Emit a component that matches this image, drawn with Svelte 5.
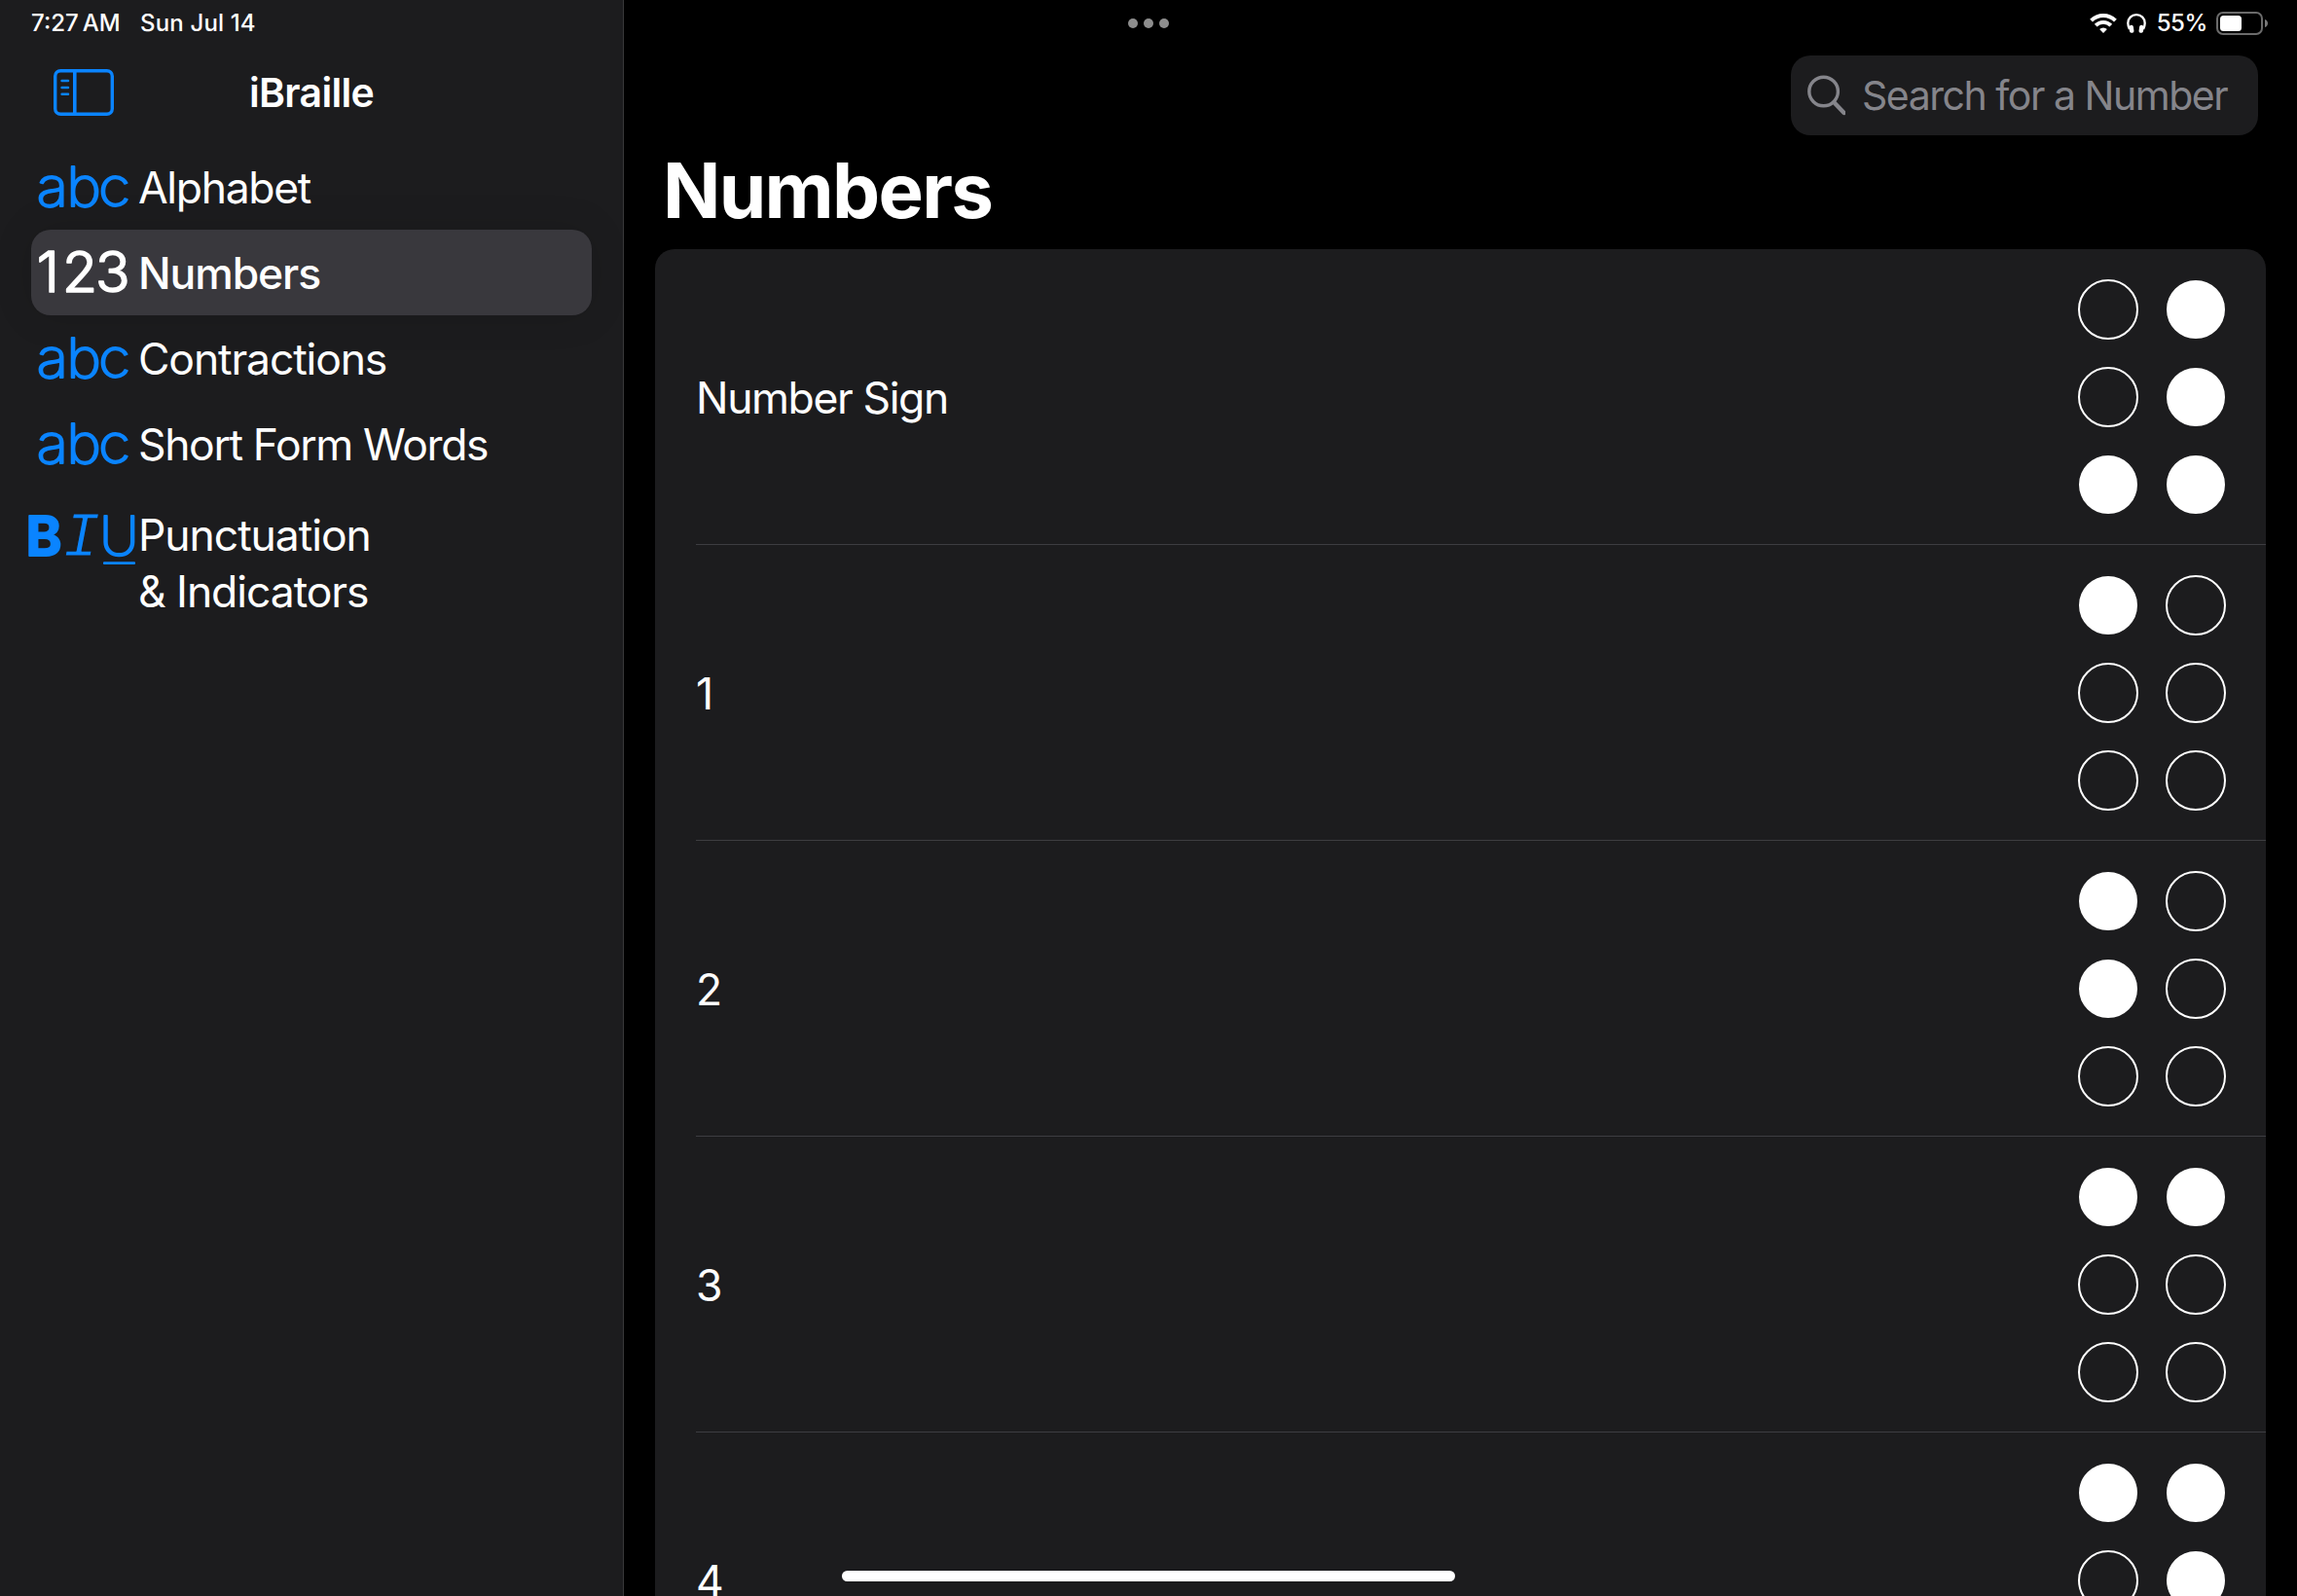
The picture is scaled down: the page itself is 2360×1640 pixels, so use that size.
<script>
  const nav = [
    { icon: 'abc', lines: ['Alphabet'], cls: 'alphabet' },
    { icon: '123', lines: ['Numbers'], cls: 'numbers', selected: true },
    { icon: 'abc', lines: ['Contractions'], cls: 'contractions' },
    { icon: 'abc', lines: ['Short Form Words'], cls: 'short' },
    { icon: 'biu', lines: ['Punctuation', '& Indicators'], cls: 'punctuation' }
  ];

  // Cells are listed row by row: left dot, right dot.
  const rows = [
    { label: 'Number Sign', cells: [0, 1, 0, 1, 1, 1] },
    { label: '1', cells: [1, 0, 0, 0, 0, 0] },
    { label: '2', cells: [1, 0, 1, 0, 0, 0] },
    { label: '3', cells: [1, 1, 0, 0, 0, 0] },
    { label: '4', cells: [1, 1, 0, 1, 0, 0] }
  ];
</script>

<div class="app">
  <aside class="sidebar">
    <div class="status left">
      <span>7:27</span><span class="am">AM</span><span class="date">Sun Jul 14</span>
    </div>

    <header class="side-head">
      <svg class="toggle" width="62" height="48" viewBox="0 0 62 48" fill="none" stroke="#0a84ff">
        <rect x="1.7" y="1.7" width="58.6" height="44.6" rx="5.5" stroke-width="3.4" />
        <path d="M21.8 2v44" stroke-width="3.6" />
        <path d="M8.6 12.1h6.4M8.6 19h6.4M8.6 25.8h6.4" stroke-width="2.5" stroke-linecap="round" />
      </svg>
      <h2>iBraille</h2>
    </header>

    <nav>
      {#each nav as item}
        <a class="item {item.cls}" class:selected={item.selected} href="#{item.cls}">
          <svg class="glyph" width="120" height="88" viewBox="0 0 120 88">
            {#if item.icon === 'abc'}
              <text class="abc" transform="scale(1.08 1)" x="5.2 33.6 63.8" y="64">abc</text>
            {:else if item.icon === '123'}
              <text class="num" transform="scale(1.03 1)" x="5.6 31 64" y="64.2">123</text>
            {:else}
              <text class="bold" x="-5.5" y="71">B</text>
              <text class="ital" x="32" y="71">I</text>
              <text class="under" x="70" y="71">U</text>
              <rect x="74" y="77.3" width="33" height="2.7" rx="1" />
            {/if}
          </svg>
          <span class="label">
            {#each item.lines as line}<span>{line}</span>{/each}
          </span>
        </a>
      {/each}
    </nav>
  </aside>

  <main>
    <div class="status right">
      <div class="dots"><i></i><i></i><i></i></div>
      <div class="indicators">
        <svg width="28" height="20" viewBox="0 0 28 20" fill="none" stroke="#fff" stroke-width="4">
          <path d="M1.6 7.2a17.6 17.6 0 0 1 24.8 0" />
          <path d="M6.2 12.1a11 11 0 0 1 15.6 0" stroke-width="3.8" />
          <path d="M14 20l-3.9-4a5.7 5.7 0 0 1 7.8 0z" fill="#fff" stroke="none" />
        </svg>
        <svg class="phones" width="20" height="20" viewBox="0 0 20 20">
          <path d="M2.9 16C1.9 14 1.3 12 1.3 9.8 1.3 4.9 5 1.2 10 1.2s8.7 3.7 8.7 8.6c0 2.2-.6 4.2-1.6 6.2" fill="none" stroke="#fff" stroke-width="2.3" />
          <rect x="2.7" y="11.8" width="4.5" height="8" rx="2" transform="rotate(-8 5 16)" fill="#fff" />
          <rect x="12.8" y="11.8" width="4.5" height="8" rx="2" transform="rotate(8 15 16)" fill="#fff" />
        </svg>
        <span class="pct">55%</span>
        <svg width="53" height="24" viewBox="0 0 53 24">
          <rect x="1" y="1" width="46" height="22" rx="6" fill="none" stroke="#6b6b6b" stroke-width="2" />
          <rect x="4" y="4" width="22" height="16" rx="3.5" fill="#fff" />
          <path d="M50 8c1.8.6 3 2.100 3 4s-1.200 3.400-3 4z" fill="#7a7a7a" />
        </svg>
      </div>
    </div>

    <div class="search">
      <svg width="40" height="44" viewBox="0 0 40 44" fill="none" stroke="#85858b">
        <circle cx="17.6" cy="18" r="14.8" stroke-width="3.4" />
        <path d="M28.4 29.2L38.6 40" stroke-width="4.4" stroke-linecap="round" />
      </svg>
      <span>Search for a Number</span>
    </div>

    <h1>Numbers</h1>

    <section class="card">
      {#each rows as row}
        <div class="row">
          <span class="name">{row.label}</span>
          <div class="cell">
            {#each row.cells as on}<b class:on></b>{/each}
          </div>
        </div>
      {/each}
    </section>
  </main>

  <div class="home"></div>
</div>

<style>
  :global(body) { margin: 0; background: #000; }
  .app {
    position: relative;
    display: grid;
    grid-template-columns: 641px 1fr;
    width: 2360px;
    height: 1640px;
    overflow: hidden;
    background: #000;
    color: #fff;
    font-family: Inter, "Liberation Sans", sans-serif;
    font-size: 44.5px;
    white-space: nowrap;
  }
  .sidebar {
    box-sizing: border-box;
    height: 1640px;
    background: #1c1c1e;
    border-right: 1px solid #38383a;
  }
  .status {
    display: flex;
    height: 48px;
    font-size: 24px;
    font-weight: 500;
    line-height: 48px;
  }
  .left { padding-left: 32px; }
  .am { margin-left: 4px; }
  .date { margin-left: 20.5px; letter-spacing: .14px; }

  .side-head {
    display: grid;
    grid-template-columns: 1fr auto 1fr;
    align-items: center;
    height: 100px;
  }
  .toggle { margin-left: 55px; margin-bottom: 6px; }
  h2 {
    margin: 0;
    padding-bottom: 6px;
    font-size: 41px;
    font-weight: 600;
    line-height: 50px;
    letter-spacing: -.7px;
  }

  nav { display: flex; flex-direction: column; padding: 0 32px; }
  .item {
    display: flex;
    height: 88px;
    border-radius: 20px;
    color: #fff;
    text-decoration: none;
  }
  .selected {
    background: #39383d;
    box-shadow: 0 0 40px rgba(0, 0, 0, .12);
    font-weight: 500;
  }
  .glyph {
    flex: none;
    width: 120px;
    margin-right: -10px;
    overflow: visible;
    fill: #0a84ff;
    stroke-linejoin: round;
  }
  .selected .glyph { fill: #fff; }
  .abc { font-size: 56px; font-weight: 200; stroke: #0a84ff; stroke-width: 1.8px; }
  .num { font-size: 57px; font-weight: 300; stroke: #fff; stroke-width: 1.7px; }
  .bold { font-size: 56px; font-weight: 700; stroke: #0a84ff; stroke-width: 1.8px; }
  .ital {
    font-family: "Liberation Mono", monospace;
    font-size: 65px;
    font-style: italic;
    stroke: #1c1c1e;
    stroke-width: 1.2px;
  }
  .under { font-size: 56px; font-weight: 200; stroke: #0a84ff; stroke-width: 1.8px; }
  .label { display: flex; flex-direction: column; padding-top: 2px; line-height: 86px; }
  .alphabet .label { letter-spacing: -1.35px; }
  .numbers .label { letter-spacing: -1.1px; }
  .contractions .label { letter-spacing: -1.15px; }
  .short .label { letter-spacing: -1.38px; }
  .punctuation { height: 138px; }
  .punctuation .label { padding-top: 21px; line-height: 58px; letter-spacing: -1.08px; }

  main { display: flex; flex-direction: column; height: 1640px; overflow: hidden; }
  .right { flex: none; justify-content: space-between; padding: 0 30px 0 518px; }
  .dots { display: flex; align-items: center; gap: 6px; }
  .dots i { width: 10px; height: 10px; border-radius: 50%; background: #8e8e8e; }
  .indicators { display: flex; align-items: center; height: 48px; }
  .phones { margin-left: 10px; }
  .pct { margin: 0 9px 0 11px; letter-spacing: -.4px; }

  .search {
    flex: none;
    box-sizing: border-box;
    display: flex;
    align-self: flex-end;
    width: 480px;
    height: 82px;
    margin: 9px 40px 0 0;
    padding: 19px 0 0 16px;
    border-radius: 20px;
    background: #1c1c1e;
    color: #85858b;
    font-size: 41px;
    line-height: 44px;
    letter-spacing: -1.47px;
  }
  .search span { margin: 0 0 0 17px; }

  h1 {
    flex: none;
    margin: 10px 0 0 40px;
    font-size: 78px;
    font-weight: 700;
    line-height: 94px;
    letter-spacing: -1.73px;
  }

  .card {
    flex: none;
    width: 1655px;
    margin: 13px 0 0 32px;
    border-radius: 20px;
    background: #1c1c1e;
  }
  .row {
    box-sizing: border-box;
    display: flex;
    justify-content: space-between;
    height: 304px;
    margin-left: 42px;
    padding-right: 42px;
    border-bottom: 1px solid #3d3d41;
  }
  .name { line-height: 306px; letter-spacing: -1.4px; }
  .cell {
    display: grid;
    grid-template-columns: 60px 60px;
    grid-auto-rows: 60px;
    gap: 30px;
    padding-top: 32px;
  }
  .cell b {
    box-sizing: border-box;
    width: 62px;
    height: 62px;
    margin: -1px;
    border: 2px solid #fff;
    border-radius: 50%;
  }
  .cell b.on { width: 60px; height: 60px; margin: 0; background: #fff; }

  .home {
    position: absolute;
    left: 865px;
    top: 1614px;
    width: 630px;
    height: 11px;
    border-radius: 6px;
    background: #fff;
  }
</style>
